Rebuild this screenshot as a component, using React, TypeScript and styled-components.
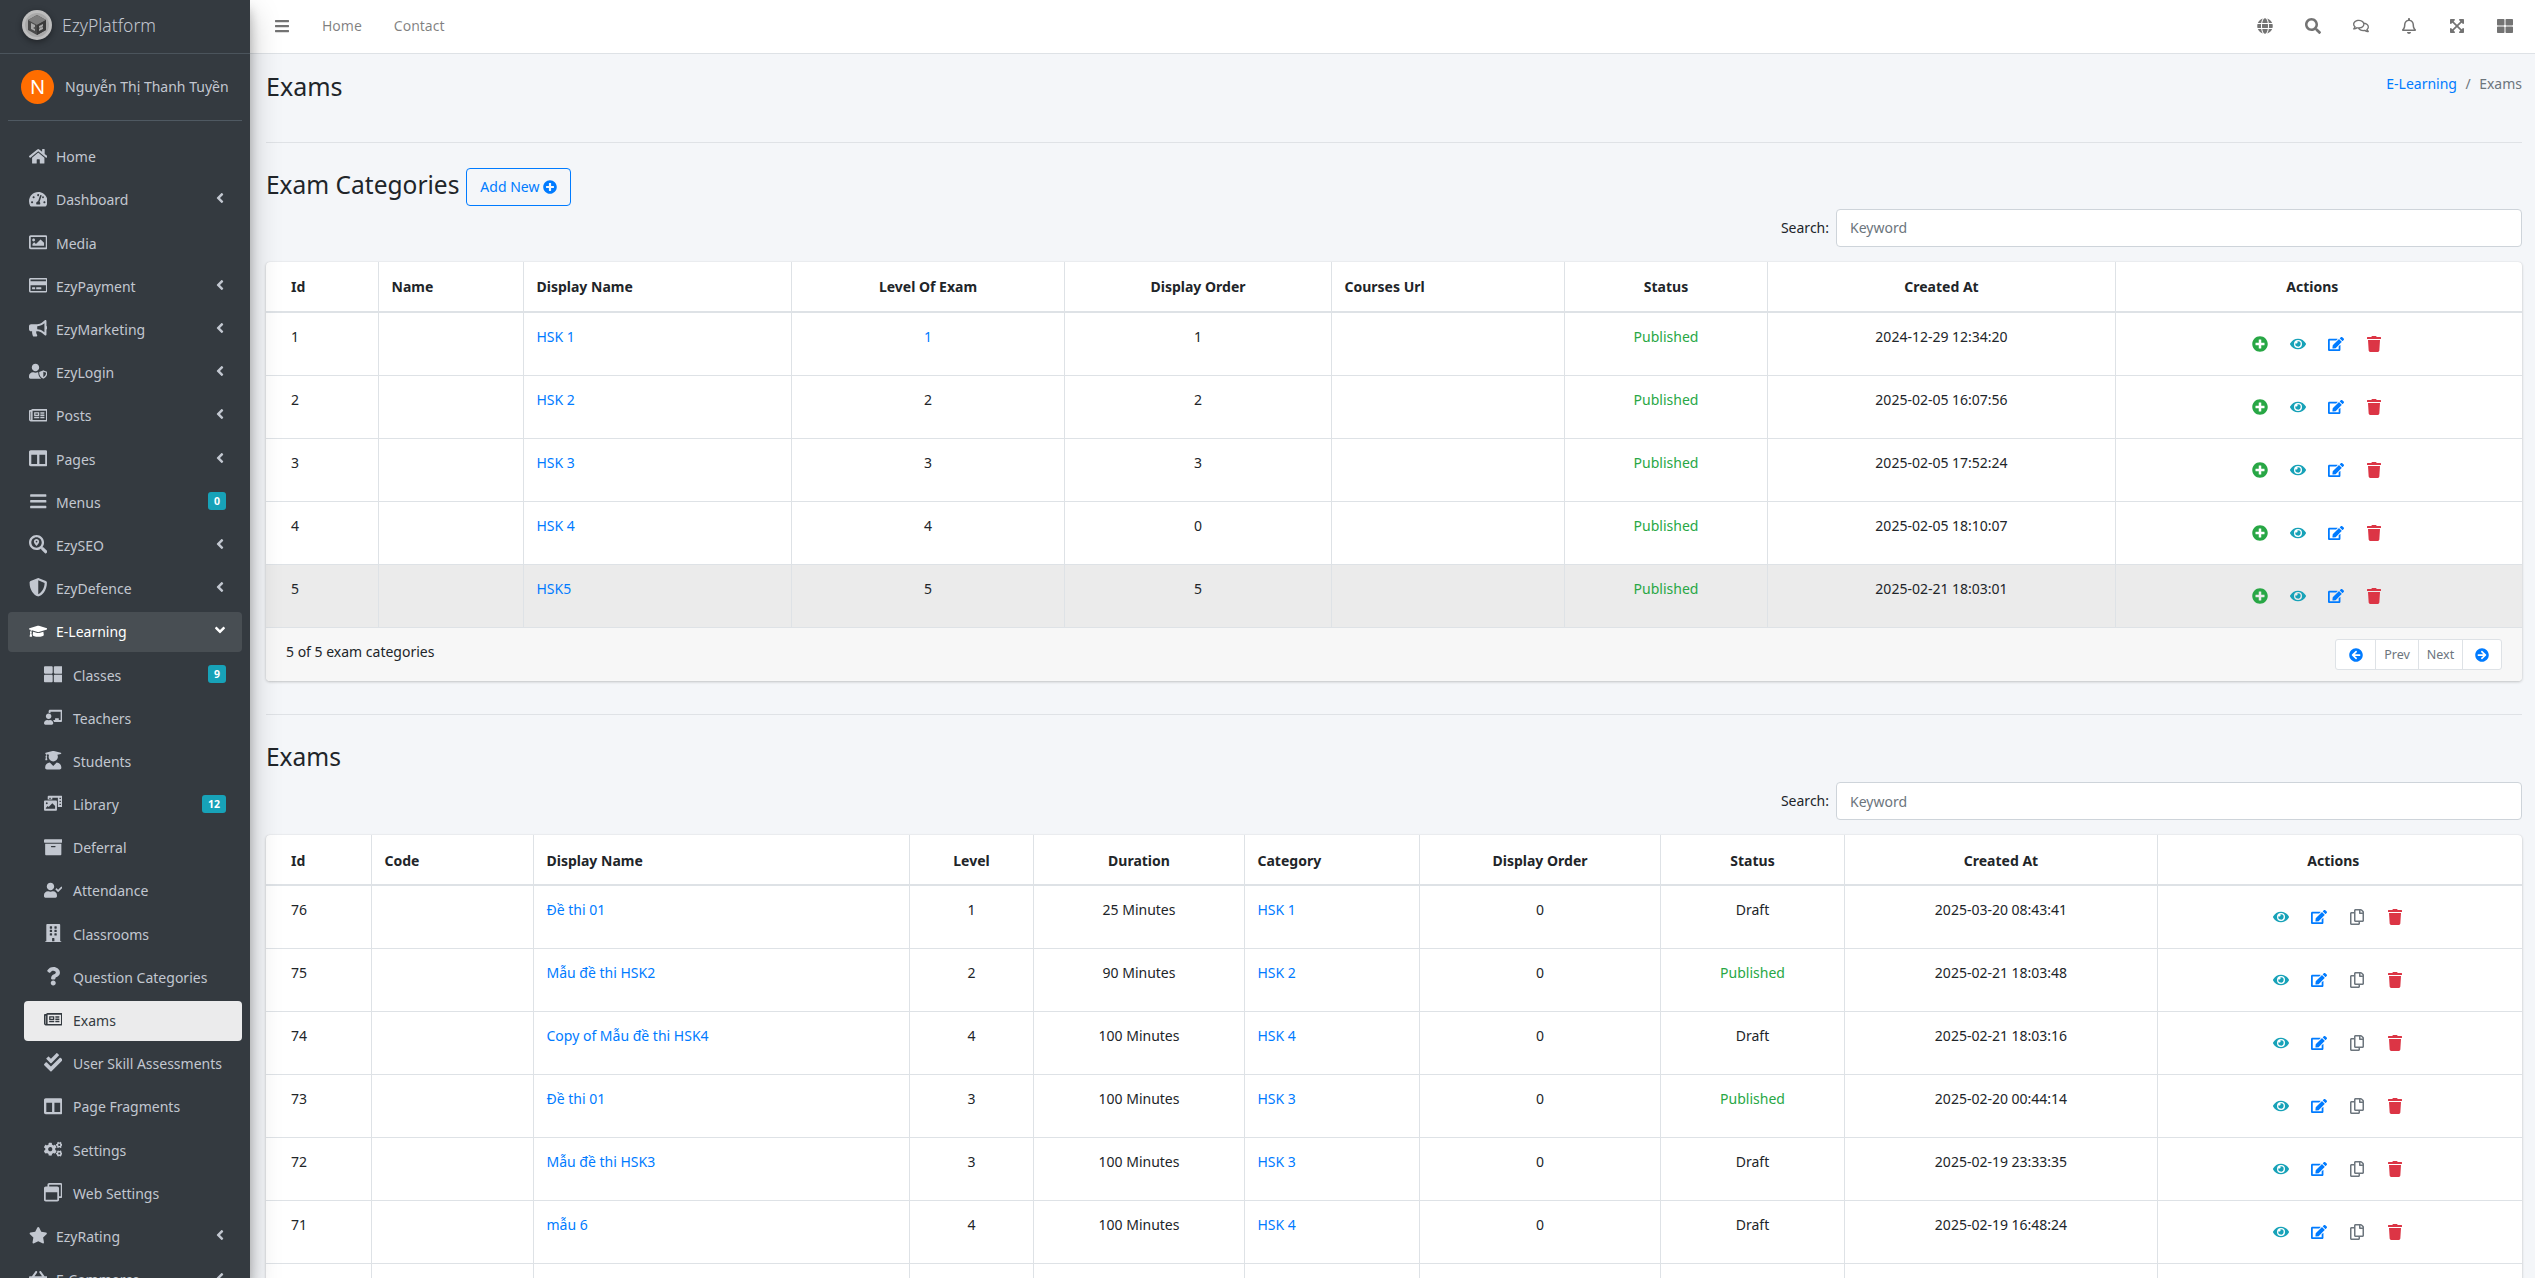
import React from "react";
import styled, { createGlobalStyle } from "styled-components";
import {
  FaHome, FaTachometerAlt, FaRegImage, FaRegCreditCard, FaBullhorn, FaUserShield, FaRegNewspaper,
  FaRegWindowRestore, FaColumns, FaBars, FaSearchLocation, FaShieldAlt, FaGraduationCap, FaThLarge,
  FaChalkboardTeacher, FaUserGraduate, FaPhotoVideo, FaArchive, FaUserCheck, FaBuilding, FaQuestion,
  FaCheckDouble, FaCogs, FaStar, FaGlobe, FaSearch, FaRegComments, FaRegBell, FaExpandArrowsAlt,
  FaPlusCircle, FaEye, FaEdit, FaRegCopy, FaTrash, FaArrowCircleLeft, FaArrowCircleRight, FaAngleLeft,
  FaAngleDown, FaShoppingBasket,
} from "react-icons/fa";

const GlobalStyle = createGlobalStyle`
  * { box-sizing: border-box; }
  html, body { margin: 0; height: 100%; overflow: hidden; }
  body {
    font-family: "Noto Sans", "Liberation Sans", sans-serif;
    font-size: 14px;
    line-height: 24px;
    color: #212529;
    background: #f4f6f9;
  }
  svg { width: auto; }
`;

const Layout = styled.div`
  display: flex;
  height: 100vh;
  overflow: hidden;
`;

const Sidebar = styled.aside`
  width: 250px;
  flex-shrink: 0;
  height: 100%;
  overflow: hidden;
  background: #343a40;
  color: #c2c7d0;
  box-shadow: 0 14px 28px rgba(0, 0, 0, 0.25), 0 10px 10px rgba(0, 0, 0, 0.22);
  position: relative;
  z-index: 2;
`;

const Brand = styled.div`
  height: 54px;
  display: flex;
  align-items: center;
  gap: 10px;
  padding: 0 0 3px 22px;
  border-bottom: 1px solid #4b545c;
  font-size: 17.5px;
  font-weight: 300;
`;

const UserPanel = styled.div`
  height: 67px;
  margin: 0 8px;
  padding: 0 0 0 13px;
  display: flex;
  align-items: center;
  gap: 11px;
  border-bottom: 1px solid #4f5962;
  font-size: 14px;
`;

const Avatar = styled.div`
  width: 33px;
  height: 34px;
  border-radius: 50%;
  background: #ff6d00;
  color: #fff;
  font-size: 20px;
  display: flex;
  align-items: center;
  justify-content: center;
`;

const Menu = styled.nav`
  padding: 16.3px 8px 0;
`;

const MenuItem = styled.div<{ $level: number; $state?: "open" | "active" }>`
  height: 40px;
  margin: 0 0 3.2px ${(p) => (p.$level ? 16 : 0)}px;
  padding: 0 16px 0 ${(p) => (p.$level ? 17 : 18)}px;
  display: flex;
  align-items: center;
  border-radius: 4px;
  ${(p) => p.$state === "open" && "background: rgba(255,255,255,.1); color: #fff;"}
  ${(p) => p.$state === "active" && "background: rgba(255,255,255,.9); color: #343a40;"}
`;

const MenuIcon = styled.span<{ $sub: boolean }>`
  width: 24px;
  display: flex;
  justify-content: center;
  margin-right: ${(p) => (p.$sub ? 8 : 6)}px;
  font-size: 18.5px;
  margin-top: -3px;
`;

const MenuLabel = styled.span`
  flex: 1;
  white-space: nowrap;
`;

const Caret = styled.span`
  display: flex;
  margin-right: -2px;
  margin-top: -4px;
  font-size: 16px;
`;

const Badge = styled.span`
  background: #17a2b8;
  color: #fff;
  font-size: 10.5px;
  font-weight: 700;
  line-height: 18px;
  padding: 0 6px;
  border-radius: 3px;
  margin-top: -3px;
`;

const Main = styled.div`
  flex: 1;
  min-width: 0;
  height: 100%;
  overflow: hidden;
`;

const Navbar = styled.header`
  height: 54px;
  background: #fff;
  border-bottom: 1px solid #dee2e6;
  display: flex;
  align-items: center;
  padding: 0 22px 2px 24px;
  color: rgba(0, 0, 0, 0.5);
`;

const NavIcon = styled.span`
  display: flex;
  font-size: 16px;
  color: rgba(0, 0, 0, 0.55);
`;

const NavLink = styled.span`
  margin-left: 32px;
  font-size: 14px;
  &:first-of-type { margin-left: 28.5px; }
`;

const NavRight = styled.div`
  margin-left: auto;
  display: flex;
  align-items: center;
  gap: 32px;
`;

const Content = styled.main`
  padding: 0 13px 0 16px;
`;

const PageHeader = styled.div`
  height: 89px;
  padding-top: 13px;
  display: flex;
  justify-content: space-between;
  align-items: flex-start;
  border-bottom: 1px solid #dfe2e6;
`;

const PageTitle = styled.h1`
  margin: 0;
  font-size: 25px;
  font-weight: 400;
  line-height: 38px;
`;

const Crumbs = styled.div`
  color: #6c757d;
  font-size: 14px;
  line-height: 34px;
`;

const Link = styled.a`
  color: #007bff;
`;

const Sep = styled.span`
  padding: 0 8.5px;
`;

const SectionHead = styled.div<{ $height: number }>`
  display: flex;
  align-items: center;
  gap: 7px;
  height: ${(p) => p.$height}px;
  margin-top: 24px;
`;

const SectionTitle = styled.h3`
  margin: -2px 0 0;
  font-size: 24.5px;
  font-weight: 400;
  line-height: 38px;
`;

const AddButton = styled.button`
  height: 38px;
  width: 105px;
  padding: 0;
  margin-top: 2px;
  display: flex;
  align-items: center;
  justify-content: center;
  gap: 4px;
  background: transparent;
  border: 1px solid #007bff;
  border-radius: 4px;
  color: #007bff;
  font: inherit;
`;

const SearchRow = styled.div`
  display: flex;
  justify-content: flex-end;
  align-items: center;
  gap: 7px;
  margin-top: 3px;
  height: 39px;
`;

const SearchInput = styled.input`
  width: 686px;
  height: 38px;
  padding: 0 13px;
  font: inherit;
  border: 1px solid #ced4da;
  border-radius: 4px;
  background: #fff;
  &::placeholder { color: #6c757d; opacity: 1; }
`;

const Card = styled.section`
  margin-top: 14.5px;
  background: #fff;
  border-radius: 4px;
  box-shadow: 0 0 1px rgba(0, 0, 0, 0.125), 0 1px 3px rgba(0, 0, 0, 0.2);
  overflow: hidden;
`;

const Table = styled.table`
  width: 100%;
  table-layout: fixed;
  border-collapse: collapse;
`;

const Col = styled.col<{ $width: number }>`
  width: ${(p) => p.$width}px;
`;

const Th = styled.th<{ $center?: boolean; $first?: boolean; $tail?: boolean }>`
  height: 50px;
  padding: 2px ${(p) => (p.$tail ? 26 : 12)}px 0 13px;
  font-weight: 700;
  font-size: 14px;
  text-align: ${(p) => (p.$center ? "center" : "left")};
  border-bottom: 2px solid #dee2e6;
  border-left: ${(p) => (p.$first ? "none" : "1px solid #dee2e6")};
  ${(p) => p.$first && "padding-left: 25px;"}
`;

const Row = styled.tr<{ $hover?: boolean }>`
  background: ${(p) => (p.$hover ? "#ebebeb" : "#fff")};
`;

const Td = styled.td<{ $center?: boolean; $first?: boolean }>`
  height: 63px;
  padding: 12px 12px 12px 13px;
  vertical-align: top;
  text-align: ${(p) => (p.$center ? "center" : "left")};
  border-top: 1px solid #dee2e6;
  border-left: ${(p) => (p.$first ? "none" : "1px solid #dee2e6")};
  ${(p) => p.$first && "padding-left: 25px;"}
  tr:first-child > & { border-top: none; }
`;

const Status = styled.span<{ $published?: boolean }>`
  color: ${(p) => (p.$published ? "#28a745" : "#212529")};
`;

const Actions = styled.div`
  display: flex;
  justify-content: center;
  align-items: center;
  height: 38px;
  margin-right: 4px;
`;

const ActionIcon = styled.span<{ $color: string }>`
  padding: 0 11px;
  display: flex;
  font-size: 16px;
  color: ${(p) => p.$color};
`;

const CardFooter = styled.div`
  height: 54px;
  background: #f7f7f7;
  border-top: 1px solid #dee2e6;
  display: flex;
  justify-content: space-between;
  align-items: center;
  padding: 0 20px;
`;

const FooterText = styled.span`
  margin-top: -5px;
`;

const Pager = styled.div`
  display: flex;
  height: 31px;
  background: #fff;
  border: 1px solid #dee2e6;
  border-radius: 3px;
  color: #6c757d;
  font-size: 12.5px;
`;

const PagerCell = styled.span<{ $width: number }>`
  width: ${(p) => p.$width}px;
  display: flex;
  align-items: center;
  justify-content: center;
  & + & { border-left: 1px solid #dee2e6; }
  svg { color: #007bff; font-size: 14px; }
`;

const Divider = styled.div`
  margin-top: 33px;
  margin-bottom: -1.5px;
  border-top: 1px solid #dfe2e6;
`;

const LogoMark = styled.svg`
  filter: drop-shadow(0 2px 3px rgba(0, 0, 0, 0.4));
`;

type NavEntry = {
  label: string;
  icon: React.ReactNode;
  level?: number;
  badge?: string;
  caret?: boolean;
  state?: "open" | "active";
};

const menu: NavEntry[] = [
  { label: "Home", icon: <FaHome /> },
  { label: "Dashboard", icon: <FaTachometerAlt />, caret: true },
  { label: "Media", icon: <FaRegImage /> },
  { label: "EzyPayment", icon: <FaRegCreditCard />, caret: true },
  { label: "EzyMarketing", icon: <FaBullhorn />, caret: true },
  { label: "EzyLogin", icon: <FaUserShield />, caret: true },
  { label: "Posts", icon: <FaRegNewspaper />, caret: true },
  { label: "Pages", icon: <FaColumns />, caret: true },
  { label: "Menus", icon: <FaBars />, badge: "0" },
  { label: "EzySEO", icon: <FaSearchLocation />, caret: true },
  { label: "EzyDefence", icon: <FaShieldAlt />, caret: true },
  { label: "E-Learning", icon: <FaGraduationCap />, state: "open" },
  { label: "Classes", icon: <FaThLarge />, level: 1, badge: "9" },
  { label: "Teachers", icon: <FaChalkboardTeacher />, level: 1 },
  { label: "Students", icon: <FaUserGraduate />, level: 1 },
  { label: "Library", icon: <FaPhotoVideo />, level: 1, badge: "12" },
  { label: "Deferral", icon: <FaArchive />, level: 1 },
  { label: "Attendance", icon: <FaUserCheck />, level: 1 },
  { label: "Classrooms", icon: <FaBuilding />, level: 1 },
  { label: "Question Categories", icon: <FaQuestion />, level: 1 },
  { label: "Exams", icon: <FaRegNewspaper />, level: 1, state: "active" },
  { label: "User Skill Assessments", icon: <FaCheckDouble />, level: 1 },
  { label: "Page Fragments", icon: <FaColumns />, level: 1 },
  { label: "Settings", icon: <FaCogs />, level: 1 },
  { label: "Web Settings", icon: <FaRegWindowRestore />, level: 1 },
  { label: "EzyRating", icon: <FaStar />, caret: true },
  { label: "E-Commerce", icon: <FaShoppingBasket />, caret: true },
];

const categoryCols = [112, 145, 268, 273, 267, 233, 203, 348, 407];
const examCols = [105, 162, 376, 124, 211, 175, 241, 184, 313, 365];

const categories = [
  ["1", "HSK 1", "1", "1", "2024-12-29 12:34:20"],
  ["2", "HSK 2", "2", "2", "2025-02-05 16:07:56"],
  ["3", "HSK 3", "3", "3", "2025-02-05 17:52:24"],
  ["4", "HSK 4", "4", "0", "2025-02-05 18:10:07"],
  ["5", "HSK5", "5", "5", "2025-02-21 18:03:01"],
];

const exams = [
  ["76", "Đề thi 01", "1", "25 Minutes", "HSK 1", "Draft", "2025-03-20 08:43:41"],
  ["75", "Mẫu đề thi HSK2", "2", "90 Minutes", "HSK 2", "Published", "2025-02-21 18:03:48"],
  ["74", "Copy of Mẫu đề thi HSK4", "4", "100 Minutes", "HSK 4", "Draft", "2025-02-21 18:03:16"],
  ["73", "Đề thi 01", "3", "100 Minutes", "HSK 3", "Published", "2025-02-20 00:44:14"],
  ["72", "Mẫu đề thi HSK3", "3", "100 Minutes", "HSK 3", "Draft", "2025-02-19 23:33:35"],
  ["71", "mẫu 6", "4", "100 Minutes", "HSK 4", "Draft", "2025-02-19 16:48:24"],
];

const Logo = () => (
  <LogoMark width="30" height="30" viewBox="0 0 30 30">
    <circle cx="15" cy="15" r="15" fill="#bdbdbd" />
    <circle cx="15" cy="15" r="12" fill="#a8a8a8" />
    <path d="M6 10l9-5 9 5v10l-9 5-9-5z" fill="#4a4a4a" />
    <path d="M6 10l9 5 9-5-9-5z" fill="#7d7d7d" />
    <path d="M15 15v10l9-5V10z" fill="#3a3a3a" />
    <path d="M9 13l4 2v2l-2 1 2 1v2l-4-2zM17 16l4-2v2l-2 2 2-1v2l-4 2v-2l2-2-2 1z" fill="#a8a8a8" />
  </LogoMark>
);

const App = () => (
  <>
    <GlobalStyle />
    <Layout>
      <Sidebar>
        <Brand>
          <Logo />
          <span>EzyPlatform</span>
        </Brand>
        <UserPanel>
          <Avatar>N</Avatar>
          <span>Nguyễn Thị Thanh Tuyền</span>
        </UserPanel>
        <Menu>
          {menu.map((m) => (
            <MenuItem key={m.label} $level={m.level ?? 0} $state={m.state}>
              <MenuIcon $sub={!!m.level}>{m.icon}</MenuIcon>
              <MenuLabel>{m.label}</MenuLabel>
              {m.badge && <Badge>{m.badge}</Badge>}
              {m.caret && <Caret><FaAngleLeft /></Caret>}
              {m.state === "open" && <Caret><FaAngleDown /></Caret>}
            </MenuItem>
          ))}
        </Menu>
      </Sidebar>
      <Main>
        <Navbar>
          <NavIcon><FaBars /></NavIcon>
          <NavLink>Home</NavLink>
          <NavLink>Contact</NavLink>
          <NavRight>
            <NavIcon><FaGlobe /></NavIcon>
            <NavIcon><FaSearch /></NavIcon>
            <NavIcon><FaRegComments /></NavIcon>
            <NavIcon><FaRegBell /></NavIcon>
            <NavIcon><FaExpandArrowsAlt /></NavIcon>
            <NavIcon><FaThLarge /></NavIcon>
          </NavRight>
        </Navbar>
        <Content>
          <PageHeader>
            <PageTitle>Exams</PageTitle>
            <Crumbs>
              <Link>E-Learning</Link>
              <Sep>/</Sep>
              Exams
            </Crumbs>
          </PageHeader>

          <SectionHead $height={38}>
            <SectionTitle>Exam Categories</SectionTitle>
            <AddButton>Add New <FaPlusCircle /></AddButton>
          </SectionHead>
          <SearchRow>
            <span>Search:</span>
            <SearchInput placeholder="Keyword" />
          </SearchRow>
          <Card>
            <Table>
              <colgroup>
                {categoryCols.map((w, i) => <Col key={i} $width={w} />)}
              </colgroup>
              <thead>
                <tr>
                  <Th $first>Id</Th>
                  <Th>Name</Th>
                  <Th>Display Name</Th>
                  <Th $center>Level Of Exam</Th>
                  <Th $center>Display Order</Th>
                  <Th>Courses Url</Th>
                  <Th $center>Status</Th>
                  <Th $center>Created At</Th>
                  <Th $center $tail>Actions</Th>
                </tr>
              </thead>
              <tbody>
                {categories.map((c, i) => (
                  <Row key={c[0]} $hover={i === 4}>
                    <Td $first>{c[0]}</Td>
                    <Td />
                    <Td><Link>{c[1]}</Link></Td>
                    <Td $center>{i === 0 ? <Link>{c[2]}</Link> : c[2]}</Td>
                    <Td $center>{c[3]}</Td>
                    <Td />
                    <Td $center><Status $published>Published</Status></Td>
                    <Td $center>{c[4]}</Td>
                    <Td $center>
                      <Actions>
                        <ActionIcon $color="#28a745"><FaPlusCircle /></ActionIcon>
                        <ActionIcon $color="#17a2b8"><FaEye /></ActionIcon>
                        <ActionIcon $color="#007bff"><FaEdit /></ActionIcon>
                        <ActionIcon $color="#dc3545"><FaTrash /></ActionIcon>
                      </Actions>
                    </Td>
                  </Row>
                ))}
              </tbody>
            </Table>
            <CardFooter>
              <FooterText>5 of 5 exam categories</FooterText>
              <Pager>
                <PagerCell $width={39}><FaArrowCircleLeft /></PagerCell>
                <PagerCell $width={43}>Prev</PagerCell>
                <PagerCell $width={44}>Next</PagerCell>
                <PagerCell $width={39}><FaArrowCircleRight /></PagerCell>
              </Pager>
            </CardFooter>
          </Card>

          <Divider />
          <SectionHead $height={41}>
            <SectionTitle>Exams</SectionTitle>
          </SectionHead>
          <SearchRow>
            <span>Search:</span>
            <SearchInput placeholder="Keyword" />
          </SearchRow>
          <Card>
            <Table>
              <colgroup>
                {examCols.map((w, i) => <Col key={i} $width={w} />)}
              </colgroup>
              <thead>
                <tr>
                  <Th $first>Id</Th>
                  <Th>Code</Th>
                  <Th>Display Name</Th>
                  <Th $center>Level</Th>
                  <Th $center>Duration</Th>
                  <Th>Category</Th>
                  <Th $center>Display Order</Th>
                  <Th $center>Status</Th>
                  <Th $center>Created At</Th>
                  <Th $center $tail>Actions</Th>
                </tr>
              </thead>
              <tbody>
                {exams.map((e) => (
                  <Row key={e[0]}>
                    <Td $first>{e[0]}</Td>
                    <Td />
                    <Td><Link>{e[1]}</Link></Td>
                    <Td $center>{e[2]}</Td>
                    <Td $center>{e[3]}</Td>
                    <Td><Link>{e[4]}</Link></Td>
                    <Td $center>0</Td>
                    <Td $center><Status $published={e[5] === "Published"}>{e[5]}</Status></Td>
                    <Td $center>{e[6]}</Td>
                    <Td $center>
                      <Actions>
                        <ActionIcon $color="#17a2b8"><FaEye /></ActionIcon>
                        <ActionIcon $color="#007bff"><FaEdit /></ActionIcon>
                        <ActionIcon $color="#6c757d"><FaRegCopy /></ActionIcon>
                        <ActionIcon $color="#dc3545"><FaTrash /></ActionIcon>
                      </Actions>
                    </Td>
                  </Row>
                ))}
                <Row>
                  <Td $first>70</Td>
                  <Td />
                  <Td />
                  <Td />
                  <Td />
                  <Td />
                  <Td />
                  <Td />
                  <Td />
                  <Td />
                </Row>
              </tbody>
            </Table>
          </Card>
        </Content>
      </Main>
    </Layout>
  </>
);

export default App;
